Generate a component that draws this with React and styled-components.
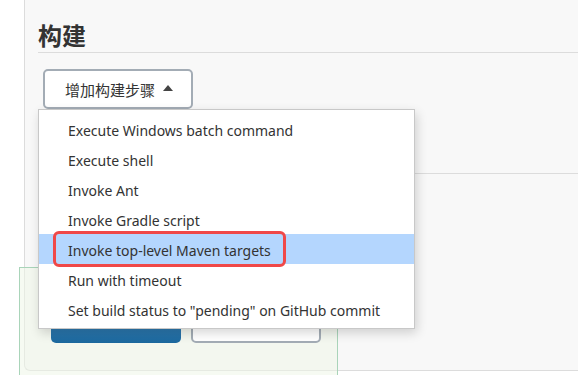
import React from "react";
import styled, { createGlobalStyle } from "styled-components";

const GlobalStyle = createGlobalStyle`
  html, body {
    margin: 0;
    padding: 0;
    background: #ffffff;
  }
  body {
    font-family: "Noto Sans", "Noto Sans CJK SC", sans-serif;
    color: #333;
    overflow: hidden;
  }
`;

const Root = styled.div`
  position: relative;
  width: 578px;
  height: 375px;
  padding-left: 24px;
  box-sizing: border-box;
`;

const Panel = styled.div`
  height: 371px;
  box-sizing: border-box;
  background: #f8f8f8;
  border-left: 1px solid #dcdcdc;
  border-bottom: 1px solid #dcdcdc;
  border-bottom-left-radius: 6px;
  padding-left: 13px;
`;

const Section = styled.div`
  height: 174px;
  box-sizing: border-box;
  border-bottom: 1px solid #dcdcdc;
  padding-top: 18px;
`;

const Heading = styled.h2`
  margin: 0;
  height: 35px;
  box-sizing: border-box;
  padding-top: 5px;
  border-bottom: 1px solid #dcdcdc;
  font-family: "Noto Sans CJK SC", sans-serif;
  font-size: 24px;
  font-weight: 700;
  line-height: 24px;
  color: #333;
`;

const AddWrap = styled.div`
  position: relative;
  margin: 16px 0 0 5px;
  width: 150px;
`;

const AddButton = styled.button`
  display: flex;
  align-items: center;
  gap: 8px;
  width: 150px;
  height: 40px;
  box-sizing: border-box;
  padding: 0 0 0 20px;
  background: #fff;
  border: 2px solid #a3acb5;
  border-radius: 5px;
  font-family: "Noto Sans CJK SC", sans-serif;
  font-size: 15px;
  color: #333;
`;

const Caret = styled.span`
  width: 0;
  height: 0;
  border-left: 5px solid transparent;
  border-right: 5px solid transparent;
  border-bottom: 6px solid #444;
  margin-top: -2px;
`;

const Menu = styled.ul`
  position: absolute;
  top: 40px;
  left: -5px;
  z-index: 3;
  width: 377px;
  margin: 0;
  padding: 4px 0;
  list-style: none;
  box-sizing: border-box;
  background: #fff;
  border: 1px solid #c8c8c8;
  box-shadow: 2px 4px 10px rgba(0, 0, 0, 0.16);
`;

const Item = styled.li`
  position: relative;
  height: 30px;
  line-height: 33px;
  padding-left: 29px;
  font-size: 14px;
  color: #333;
  white-space: nowrap;
  background: ${(p) => (p.$active ? "#b4d6fe" : "transparent")};
`;

const Marker = styled.span`
  position: absolute;
  left: 14px;
  top: -3px;
  width: 233px;
  height: 36px;
  box-sizing: border-box;
  border: 3px solid #f04848;
  border-radius: 6px;
`;

const BottomBar = styled.div`
  position: absolute;
  left: 19px;
  top: 267px;
  z-index: 2;
  width: 319px;
  height: 120px;
  box-sizing: border-box;
  padding: 37px 0 0 31px;
  display: flex;
  gap: 10px;
  background: rgba(238, 245, 232, 0.55);
  border: 1px solid #a9d4b9;
`;

const BarButton = styled.button`
  width: 130px;
  height: 38px;
  box-sizing: border-box;
  border-radius: 5px;
  border: ${(p) => (p.$primary ? "none" : "2px solid #a3acb5")};
  background: ${(p) =>
    p.$primary ? "linear-gradient(#4a92c9, #1b689e)" : "#fff"};
`;

const items = [
  "Execute Windows batch command",
  "Execute shell",
  "Invoke Ant",
  "Invoke Gradle script",
  "Invoke top-level Maven targets",
  "Run with timeout",
  'Set build status to "pending" on GitHub commit',
];

export default function App() {
  return (
    <Root>
      <GlobalStyle />
      <Panel>
        <Section>
          <Heading>构建</Heading>
          <AddWrap>
            <AddButton>
              增加构建步骤 <Caret />
            </AddButton>
            <Menu>
              {items.map((label, i) => (
                <Item key={label} $active={i === 4}>
                  {i === 4 && <Marker />}
                  {label}
                </Item>
              ))}
            </Menu>
          </AddWrap>
        </Section>
      </Panel>
      <BottomBar>
        <BarButton $primary />
        <BarButton />
      </BottomBar>
    </Root>
  );
}
